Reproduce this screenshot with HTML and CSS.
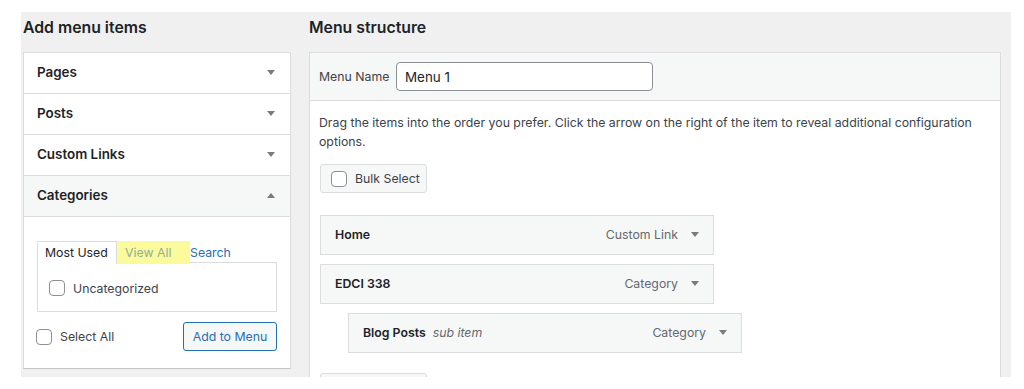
FILE: index.html
```html
<!DOCTYPE html>
<html lang="en">
<head>
<meta charset="utf-8">
<title>Menus</title>
<link rel="stylesheet" href="styles.css">
</head>
<body>
<div class="wrap">
  <div class="col col-left">
    <h2 class="col-title">Add menu items</h2>
    <div class="accordion">
      <div class="acc-head"><span>Pages</span><i class="tri down"></i></div>
      <div class="acc-head"><span>Posts</span><i class="tri down"></i></div>
      <div class="acc-head"><span>Custom Links</span><i class="tri down"></i></div>
      <div class="acc-head open"><span>Categories</span><i class="tri up"></i></div>
      <div class="acc-body">
        <div class="tabs">
          <span class="tab active">Most Used</span>
          <span class="tab hl">View All</span>
          <span class="tab link">Search</span>
        </div>
        <div class="tab-panel">
          <label class="check"><span class="box"></span>Uncategorized</label>
        </div>
        <div class="acc-foot">
          <label class="check"><span class="box"></span>Select All</label>
          <button class="btn-blue">Add to Menu</button>
        </div>
      </div>
    </div>
  </div>
  <div class="col col-right">
    <h2 class="col-title">Menu structure</h2>
    <div class="panel">
      <div class="panel-head">
        <label class="name-label">Menu Name</label>
        <div class="name-input">Menu 1</div>
      </div>
      <div class="panel-body">
        <p class="desc">Drag the items into the order you prefer. Click the arrow on the right of the item to reveal additional configuration options.</p>
        <div class="btn-gray"><span class="box"></span>Bulk Select</div>
        <ul class="items">
          <li class="item"><span class="item-title">Home</span><span class="item-type">Custom Link</span><i class="tri down"></i></li>
          <li class="item"><span class="item-title">EDCI 338</span><span class="item-type">Category</span><i class="tri down"></i></li>
          <li class="item sub"><span class="item-title">Blog Posts</span><em class="sub-note">sub item</em><span class="item-type">Category</span><i class="tri down"></i></li>
        </ul>
        <div class="btn-gray cut"></div>
      </div>
    </div>
  </div>
</div>
</body>
</html>
```

FILE: styles.css
```css
* { box-sizing: border-box; }
html, body { margin: 0; padding: 0; background: #fff; }
body {
  font-family: Inter, "Noto Sans", "Liberation Sans", sans-serif;
  font-size: 12.3px;
  color: #1d2327;
  overflow: hidden;
}
.wrap {
  margin: 12px 13px 0 21px;
  height: 365px;
  background: #f0f0f1;
  display: grid;
  grid-template-columns: 268px 692px;
  column-gap: 18px;
  padding: 0 10px 0 2px;
  overflow: hidden;
}
.col-title {
  margin: 0;
  height: 40px;
  font-size: 15.8px;
  font-weight: 600;
  line-height: 31px;
  color: #1d2327;
}
.accordion {
  background: #fff;
  border: 1px solid #dcdcde;
  border-bottom-color: #c3c4c7;
}
.acc-head {
  height: 41px;
  border-bottom: 1px solid #dcdcde;
  display: flex;
  align-items: center;
  justify-content: space-between;
  padding: 0 15px 3px 13px;
  font-size: 13.4px;
  font-weight: 600;
}
.acc-head .tri { margin-top: 2px; }
.acc-head.open { background: #f6f7f7; }
.tri {
  display: block;
  width: 0; height: 0;
  border-left: 4px solid transparent;
  border-right: 4px solid transparent;
}
.tri.down { border-top: 5px solid #787c82; }
.tri.up { border-bottom: 5px solid #787c82; }
.acc-body { padding: 24px 13px 17px 13px; }
.tabs { display: flex; height: 22px; }
.tab {
  display: flex; align-items: center;
  height: 23px;
  padding: 0 8px 1px;
  white-space: nowrap;
  flex-shrink: 0;
}
.tab.active {
  border: 1px solid #dcdcde;
  border-bottom: none;
  background: #fff;
  position: relative;
  z-index: 1;
  color: #1d2327;
  width: 80px;
  padding-left: 7px;
  padding-right: 0;
}
.tab.hl {
  background: #fbfb9c;
  color: #8fae9a;
  width: 73px;
  padding-left: 8px;
}
.tab.link { color: #2271b1; padding-left: 0; }
.tab-panel {
  border: 1px solid #dcdcde;
  height: 50px;
  display: flex;
  align-items: center;
  padding: 2px 0 0 11px;
  margin-top: -1px;
}
.check {
  display: flex; align-items: center;
  color: #3c434a;
}
.box {
  display: inline-block;
  width: 16px; height: 16px;
  border: 1px solid #8c8f94;
  border-radius: 4px;
  background: #fff;
  margin-right: 8px;
}
.acc-foot {
  display: flex; align-items: center; justify-content: space-between;
  margin-top: 10px;
}
.acc-foot .check { margin-left: -1px; }
.btn-blue {
  height: 29px;
  width: 94px;
  border: 1px solid #2271b1;
  border-radius: 3px;
  background: #f6f7f7;
  color: #2271b1;
  font-family: inherit;
  font-size: 12.3px;
  padding: 0;
}
.panel {
  background: #fff;
  border: 1px solid #dcdcde;
  border-bottom: none;
  height: 325px;
}
.panel-head {
  height: 48px;
  background: #f6f7f7;
  border-bottom: 1px solid #dcdcde;
  display: flex; align-items: center;
  padding-left: 9px;
}
.name-label { color: #3c434a; width: 77px; }
.name-input {
  width: 257px; height: 29px;
  border: 1px solid #8c8f94;
  border-radius: 4px;
  background: #fff;
  display: flex; align-items: center;
  padding-left: 8px;
  font-size: 13.4px;
  color: #1d2327;
}
.panel-body { padding: 12px 10px 0 9px; }
.desc {
  margin: 0;
  line-height: 19px;
  color: #3c434a;
  width: 670px;
}
.btn-gray {
  display: inline-flex; align-items: center;
  margin: 13px 0 0 1px;
  height: 29px;
  width: 107px;
  border: 1px solid #dcdcde;
  border-radius: 3px;
  background: #f6f7f7;
  padding-left: 10px;
  color: #3c434a;
}
.items { list-style: none; margin: 22px 0 0 1px; padding: 0; }
.item {
  width: 394px; height: 40px;
  background: #f6f7f7;
  border: 1px solid #dcdcde;
  display: flex; align-items: center;
  padding: 0 14px 1px 14px;
  margin-bottom: 9px;
}
.item.sub { margin-left: 28px; }
.item-title { font-weight: 600; color: #1d2327; }
.sub-note { margin-left: 7px; color: #646970; }
.item-type { margin-left: auto; margin-right: 13px; color: #646970; }
.btn-gray.cut { margin-top: 11px; }
```
